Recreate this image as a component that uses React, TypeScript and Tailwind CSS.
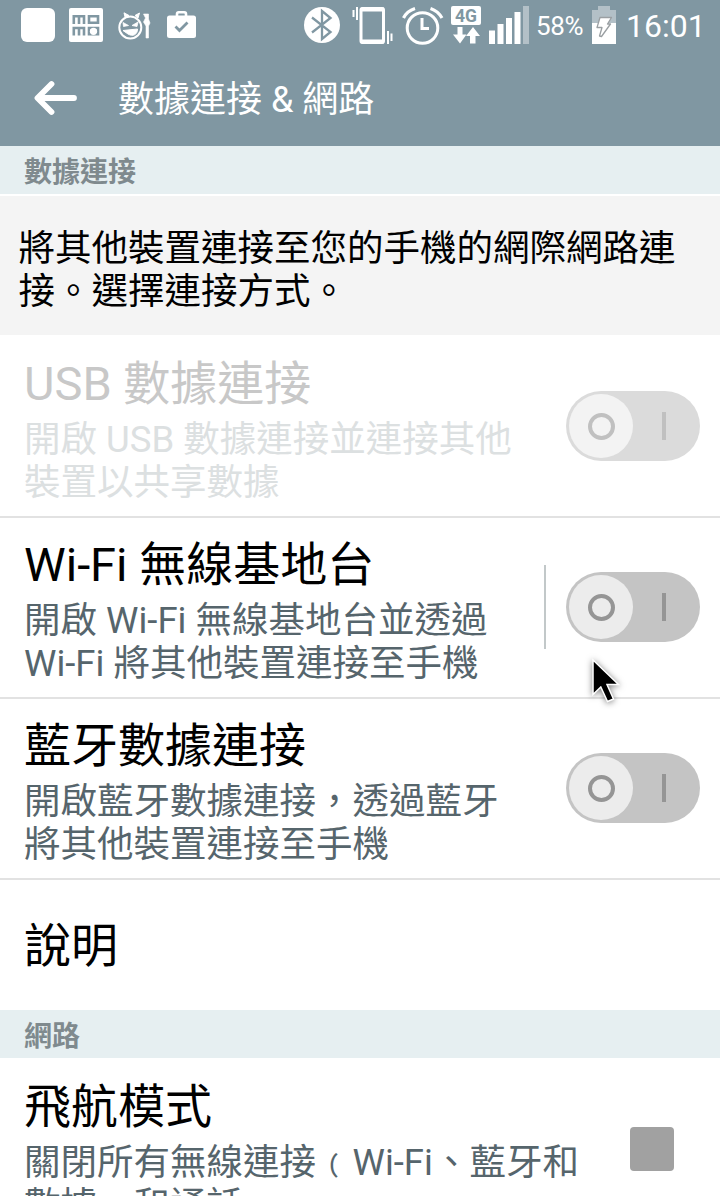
import type { ReactNode } from "react";

const cjk = "font-[Roboto,'Noto_Sans_CJK_TC',sans-serif]";

function MomoIcon() {
  return (
    <svg width="34" height="34" viewBox="0 0 34 34">
      <rect width="34" height="34" rx="2" fill="#fff" />
      <g fill="none" stroke="#8097a2" strokeWidth="2.600">
        <path d="M4.800 16V8.300H15V16M10 8.300V16M4.800 27.500V20H15V27.500M10 20V27.500" />
        <path d="M20 8.300H29V14.700H20Z" />
        <path d="M20 20H29V26.300H20Z" />
      </g>
      <circle cx="24.500" cy="23.300" r="3.600" fill="#fff" />
    </svg>
  );
}

function DevilIcon() {
  return (
    <svg width="34" height="30" viewBox="0 0 34 30" fill="none" stroke="#fff">
      <circle cx="12.300" cy="15.500" r="11" strokeWidth="2" />
      <path d="M7 5L6 .8L11 3.500ZM17 3.500L21.500 1L20 6Z" fill="#fff" strokeWidth="1" />
      <path d="M5 10.500L10.500 13.500L5.500 14.500ZM20 10L14 13.500L19 14.500Z" fill="#fff" strokeWidth=".8" />
      <path d="M5 18.500L19.500 17C19.500 22.500 15 25 10 22Z" fill="#fff" strokeWidth="1" />
      <path d="M25.500 2H30.500V7L32 11L30.500 14V26H28V14L25.500 10L27.500 6Z" fill="#fff" strokeWidth=".6" />
    </svg>
  );
}

function BriefcaseIcon() {
  return (
    <svg width="30" height="28" viewBox="0 0 30 28">
      <path d="M10 5V3Q10 1.300 11.700 1.300H17.300Q19 1.300 19 3V5" fill="none" stroke="#fff" strokeWidth="2.600" />
      <rect y="4.500" width="29" height="22.500" rx="2.500" fill="#fff" />
      <path d="M8.500 15.500L12.500 19.500L20.500 11.500" fill="none" stroke="#8097a2" strokeWidth="2.800" />
    </svg>
  );
}

function BluetoothIcon() {
  return (
    <svg width="36" height="36" viewBox="0 0 36 36">
      <circle cx="18" cy="18" r="18" fill="#fff" />
      <path d="M8 10.500L26.500 25L18 32V4L26.500 11L8 25.500" fill="none" stroke="#8097a2" strokeWidth="2.300" />
    </svg>
  );
}

function VibrateIcon() {
  return (
    <svg width="41" height="38" viewBox="0 0 41 38" fill="none" stroke="#fff">
      <rect x="9" y="1.500" width="22.500" height="34" rx="1.500" strokeWidth="3" />
      <path d="M9 2.500H32M9 34.500H32" strokeWidth="4" />
      <path d="M1.500 3V10M5 0V13M36 24V37M39.500 26.500V34" strokeWidth="2" />
    </svg>
  );
}

function AlarmIcon() {
  return (
    <svg width="42" height="38" viewBox="0 0 42 38" fill="none" stroke="#fff">
      <circle cx="20.500" cy="21" r="15.300" strokeWidth="3" />
      <path d="M1.500 11Q5 4 13 1.500M28.500 1.500Q36 4 40 11" strokeWidth="3.200" />
      <path d="M20 11V21.500H27" strokeWidth="3" />
    </svg>
  );
}

function DataIcon() {
  return (
    <svg width="30" height="38" viewBox="0 0 30 38">
      <rect width="30" height="19" rx="2" fill="#fff" />
      <text x="15" y="15.800" textAnchor="middle" fontFamily="Roboto" fontSize="18.500" fontWeight="700" fill="#8097a2" textLength="22" lengthAdjust="spacingAndGlyphs">4G</text>
      <path d="M6.500 21H11.500V28.500H15.500L9 37.500L2 28.500H6.500ZM19 37.500H24.500V30H29L22 21L15 30H19Z" fill="#fff" />
    </svg>
  );
}

function SignalIcon() {
  return (
    <svg width="40" height="38" viewBox="0 0 40 38" fill="#fff">
      <path d="M0 24.500H6V38H0ZM8.500 18H14.500V38H8.500ZM17 12H23V38H17ZM25.500 6H31.500V38H25.500Z" />
      <path d="M34 0H40V38H34Z" fillOpacity=".4" />
    </svg>
  );
}

function BatteryIcon() {
  return (
    <svg width="24" height="38" viewBox="0 0 24 38">
      <path d="M6 0H18V4H24V17H0V4H6Z" fill="#fff" fillOpacity=".4" />
      <path d="M0 17H24V38H0Z" fill="#fff" />
      <path d="M8 11.500H19.500L15.500 18H18.500L9.500 30.500L7.500 30L10 21.500H5Z" fill="#fff" stroke="#9a9fa2" strokeWidth="1.300" strokeLinejoin="round" />
    </svg>
  );
}

function StatusBar() {
  return (
    <div className="flex h-[50px] shrink-0 pl-[21px] text-white">
      <div className="mt-2 size-[34px] rounded-[6px] bg-white" />
      <div className="mt-2 ml-[14px]"><MomoIcon /></div>
      <div className="mt-3 ml-[15px]"><DevilIcon /></div>
      <div className="mt-[11px] ml-[15px]"><BriefcaseIcon /></div>
      <div className="mt-[7px] ml-[107px]"><BluetoothIcon /></div>
      <div className="mt-[7px] ml-3"><VibrateIcon /></div>
      <div className="mt-[7px] ml-[9px]"><AlarmIcon /></div>
      <div className="mt-[6px] ml-[7px]"><DataIcon /></div>
      <div className="mt-[6px] ml-2"><SignalIcon /></div>
      <span className="ml-[7px] w-14 text-[26px] leading-[52px] whitespace-nowrap tracking-[-0.3px]">58%</span>
      <div className="mt-[6px]"><BatteryIcon /></div>
      <span className="ml-[10px] text-[32px] leading-[53px] whitespace-nowrap">16:01</span>
    </div>
  );
}

function SectionHeader({ children }: { children: ReactNode }) {
  return (
    <h2 className="h-12 shrink-0 bg-[#e6eff1] pl-6 text-[28px] leading-[53px] font-bold text-[#7f8a8e]">
      {children}
    </h2>
  );
}

function Toggle({ disabled = false }: { disabled?: boolean }) {
  return (
    <button disabled={disabled} className={`mt-px flex h-[70px] w-[134px] items-center rounded-full pl-[3px] ${disabled ? "bg-[#dbdbdb]" : "bg-[#c4c4c4]"}`}>
      <span className={`flex size-16 items-center justify-center rounded-full ${disabled ? "bg-[#f3f3f3]" : "bg-[#ececec]"}`}>
        <span className={`size-[27px] rounded-full border-4 ${disabled ? "border-[#c0c0c0]" : "border-[#959595]"}`} />
      </span>
      <span className={`ml-[29px] h-7 w-1 ${disabled ? "bg-[#c0c0c0]" : "bg-[#959595]"}`} />
    </button>
  );
}

interface RowProps {
  title: string;
  lines: string[];
  disabled?: boolean;
  separated?: boolean;
}

function ToggleRow({ title, lines, disabled, separated }: RowProps) {
  return (
    <div className="flex h-[181px] shrink-0 items-center justify-between pr-5 pl-6 shadow-[0_2px_0_#e2e2e2]">
      <RowText title={title} lines={lines} disabled={disabled} />
      <div className="flex items-center gap-5">
        {separated && <div className="h-[84px] w-[2px] bg-[#c2c8c9]" />}
        <Toggle disabled={disabled} />
      </div>
    </div>
  );
}

function RowText({ title, lines, disabled }: RowProps) {
  return (
    <div className="h-[181px] pt-5 whitespace-nowrap">
      <div className={`h-[63px] text-[47px] leading-[57px] ${disabled ? "text-[#c8c8c8]" : "text-black"}`}>{title}</div>
      <div className={`text-[36.500px] leading-[43px] ${disabled ? "text-[#dce0e1]" : "text-[#56656c]"}`}>
        {lines.map((line) => <div key={line}>{line}</div>)}
      </div>
    </div>
  );
}

export default function App() {
  return (
    <main className={`relative flex h-[1196px] w-[720px] flex-col overflow-hidden bg-white ${cjk}`}>
      <header className="h-[146px] shrink-0 bg-[#8097a2]">
        <StatusBar />
        <div className="flex h-24 items-center pl-[34px] text-white">
          <svg width="44" height="36" viewBox="0 0 44 36" fill="none" stroke="#fff" strokeWidth="5.800" strokeLinecap="round" strokeLinejoin="round">
            <path d="M17.500 4L3.500 18L17.500 32M4 18H40" />
          </svg>
          <h1 className="mt-[3px] ml-10 text-[36px] leading-[48px]">數據連接 &amp; 網路</h1>
        </div>
      </header>
      <SectionHeader>數據連接</SectionHeader>
      <div className="mt-[2px] h-[139px] shrink-0 bg-[#f4f4f4] pt-[31px] pl-[18.500px] text-[36.500px] leading-[43px] whitespace-nowrap text-black">
        <div>將其他裝置連接至您的手機的網際網路連</div>
        <div>接。選擇連接方式。</div>
      </div>
      <ToggleRow title="USB 數據連接" lines={["開啟 USB 數據連接並連接其他", "裝置以共享數據"]} disabled />
      <ToggleRow title="Wi-Fi 無線基地台" lines={["開啟 Wi-Fi 無線基地台並透過", "Wi-Fi 將其他裝置連接至手機"]} separated />
      <ToggleRow title="藍牙數據連接" lines={["開啟藍牙數據連接，透過藍牙", "將其他裝置連接至手機"]} />
      <div className="flex h-[132px] shrink-0 items-center pt-1 pl-6 text-[47px] text-black">說明</div>
      <SectionHeader>網路</SectionHeader>
      <div className="flex h-[181px] shrink-0 items-center justify-between pr-[46px] pl-6">
        <RowText title="飛航模式" lines={["關閉所有無線連接﹙Wi-Fi、藍牙和", "數據﹚和通話"]} />
        <div className="mt-px size-11 rounded-[4px] bg-[#a1a1a1]" />
      </div>
      <svg className="absolute top-[652px] left-[583px]" width="44" height="58" viewBox="0 0 44 58">
        <path d="M10 8V42.500L17.800 35L24.500 49.500L30.500 47L24 32.500H35.500Z" fill="#000" stroke="#fff" strokeWidth="1.500" className="drop-shadow-[0_1px_3px_rgba(0,0,0,0.5)]" />
      </svg>
    </main>
  );
}
